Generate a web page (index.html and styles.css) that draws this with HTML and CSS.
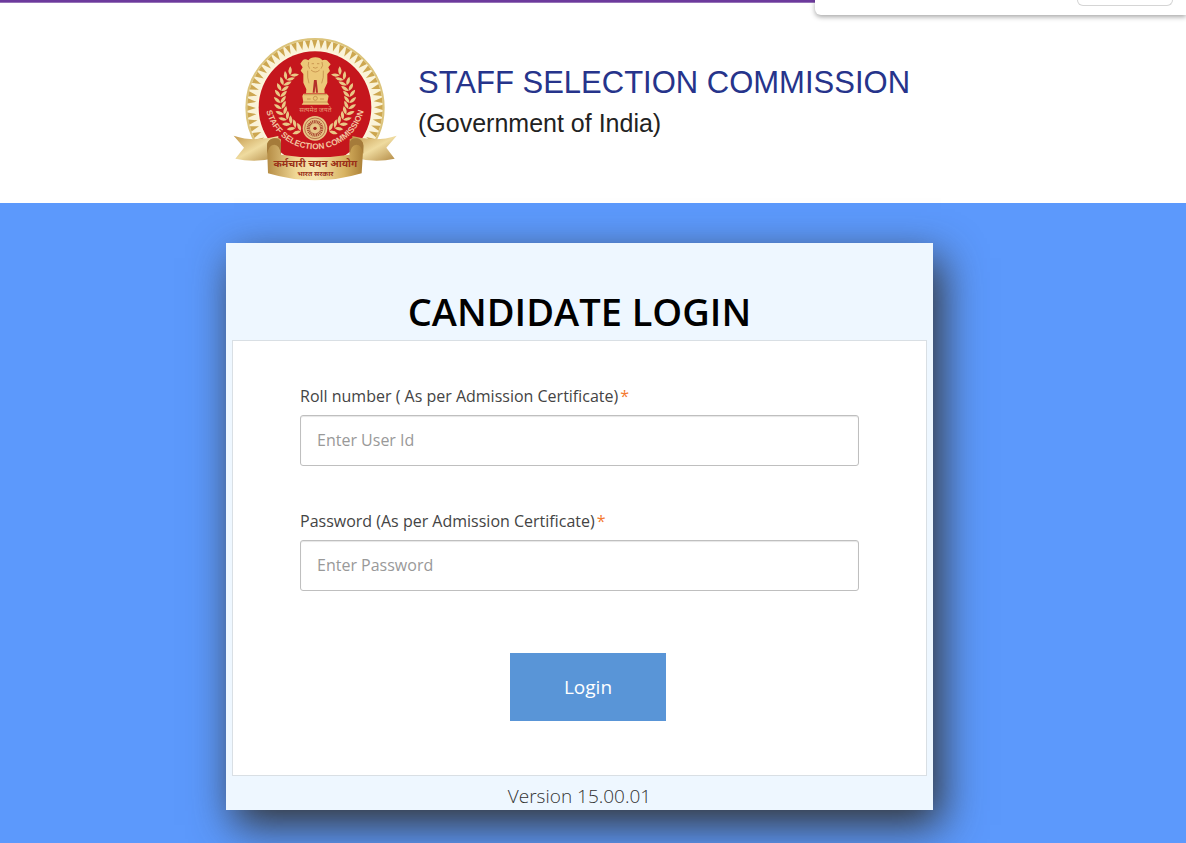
FILE: index.html
```
<!DOCTYPE html>
<html lang="en">
<head>
  <meta charset="UTF-8">
  <meta name="viewport" content="width=device-width, initial-scale=1">
  <title>Candidate Login</title>
  <link rel="stylesheet" href="styles.css">
</head>
<body>
  <div class="top-line"></div>
  <div class="popup"><div class="popup-box"></div></div>

  <header class="site-header">
    <div class="brand">
      <svg class="emblem" viewBox="0 0 540 480" role="img" aria-label="Staff Selection Commission emblem">
        <defs>
          <linearGradient id="gold" x1="0" x2="1" y1="0" y2="0">
            <stop offset="0" stop-color="#b58c44"/>
            <stop offset=".3" stop-color="#f0d795"/>
            <stop offset=".5" stop-color="#f7e4b0"/>
            <stop offset=".8" stop-color="#d9b462"/>
            <stop offset="1" stop-color="#ab8038"/>
          </linearGradient>
          <linearGradient id="tail" x1="0" x2="1" y1="0" y2="1">
            <stop offset="0" stop-color="#c59a4d"/>
            <stop offset=".5" stop-color="#efdb9f"/>
            <stop offset="1" stop-color="#b18843"/>
          </linearGradient>
          <path id="ringText" d="M120 208 A150 150 0 0 0 420 208"/>
        </defs>
        <circle cx="270" cy="233" r="206" fill="#faf3d8" stroke="#dcc47c" stroke-width="6"/>
        <g id="teeth" fill="#cda750"></g>
        <circle cx="270" cy="233" r="174" fill="#fdf6dc"/>
        <circle cx="270" cy="233" r="169" fill="#c5161d"/>
        <g id="laurel" fill="#eac886"></g>

        <!-- lion capital -->
        <g fill="#ecc878">
          <path d="M232 92 Q240 84 250 91 Q256 82 271 82 Q286 82 292 91 Q304 85 311 96 L317 103 L310 112 L315 123 L307 132 L307 158 L298 178 L299 190 H243 L244 178 L235 158 V132 L227 122 L233 112 L226 101 Z"/>
          <path d="M236 191 H305 L311 198 L307 217 L313 224 H230 L235 217 L232 198 Z"/>
        </g>
        <g fill="none" stroke="#b98040" stroke-width="2">
          <path d="M251 96 Q247 107 254 116 M291 96 Q296 107 288 116 M260 101 H267 M276 101 H283 M264 112 Q271 117 278 112 M248 122 Q246 143 252 160 M295 122 Q297 143 290 160 M258 120 Q271 132 284 120"/>
          <path d="M237 194 H305 M236 216 H307"/>
          <circle cx="271" cy="205" r="6"/>
          <path d="M246 207 H257 M285 207 H297"/>
        </g>
        <path d="M267 150 L263 188 H269 L271 168 L273 188 H279 L275 150 Z" fill="#b4302a"/>
        <text class="motto" x="271" y="247">सत्यमेव जयते</text>

        <!-- wheel -->
        <circle cx="270" cy="295" r="37" fill="#e7c586"/>
        <circle cx="270" cy="295" r="31" fill="none" stroke="#a34a2c" stroke-width="2"/>
        <circle cx="270" cy="295" r="20" fill="none" stroke="#a8452f" stroke-width="10" stroke-dasharray="3 2"/>
        <circle cx="270" cy="295" r="5" fill="#a3231d"/>

        <text class="ring-text"><textPath href="#ringText" startOffset="50%">STAFF SELECTION COMMISSION</textPath></text>

        <!-- ribbon -->
        <path d="M26 317 Q88 338 160 318 L160 382 Q92 400 31 386 L57 353 Z" fill="url(#tail)"/>
        <path d="M515 317 Q452 338 382 318 L382 382 Q448 400 509 386 L484 353 Z" fill="url(#tail)"/>
        <path d="M126 348 Q126 330 145 325 Q160 322 168 328 L168 374 Q270 390 374 374 L374 328 Q382 322 397 325 Q415 330 415 348 L410 430 Q270 472 129 430 Z" fill="url(#gold)"/>
        <path d="M126 346 Q128 328 148 325 Q166 324 168 340 L168 374 Q164 344 148 344 Q132 344 126 372 Z" fill="#a57b3a"/>
        <path d="M415 346 Q413 328 394 325 Q376 324 374 340 L374 374 Q378 344 394 344 Q410 344 415 372 Z" fill="#a57b3a"/>
        <text class="ribbon-text" x="271" y="412">कर्मचारी चयन आयोग</text>
        <text class="ribbon-small" x="271" y="439">भारत सरकार</text>
      </svg>
      <div class="brand-text">
        <div class="brand-name">STAFF SELECTION COMMISSION</div>
        <div class="brand-sub">(Government of India)</div>
      </div>
    </div>
  </header>

  <main class="page">
    <div class="login-card">
      <h1>CANDIDATE LOGIN</h1>
      <form class="login-form">
        <div class="form-group">
          <label for="userid">Roll number ( As per Admission Certificate)<span class="required">*</span></label>
          <input id="userid" name="userid" type="text" placeholder="Enter User Id">
        </div>
        <div class="form-group">
          <label for="password">Password (As per Admission Certificate)<span class="required">*</span></label>
          <input id="password" name="password" type="password" placeholder="Enter Password">
        </div>
        <button type="submit" class="login-btn">Login</button>
      </form>
      <div class="version">Version 15.00.01</div>
    </div>
  </main>
  <script src="script.js"></script>
</body>
</html>
```
FILE: styles.css
```
* {
  box-sizing: border-box;
}
body {
  margin: 0;
  min-height: 100vh;
  display: flex;
  flex-direction: column;
  font-family: "Open Sans", sans-serif;
  background: #fff;
  color: #333;
}
.top-line {
  height: 3px;
  background: #6c3a9c;
  border-bottom: 1px solid #9672b8;
}

/* panel hanging over the top right corner */
.popup {
  position: absolute;
  top: 0;
  right: 0;
  width: 371px;
  height: 15px;
  padding-right: 13px;
  background: #fff;
  border-bottom-left-radius: 6px;
  box-shadow: 0 2px 5px rgba(0,0,0,0.35);
}
.popup-box {
  width: 96px;
  height: 6px;
  margin-left: auto;
  border: 1px solid #d5d5d5;
  border-top: none;
  border-radius: 0 0 6px 6px;
}

.site-header {
  height: 200px;
  padding: 27px 27px 0 0;
}
.brand {
  display: flex;
  width: 709px;
  margin: 0 auto;
}
.emblem {
  width: 180px;
  height: 160px;
  flex: none;
}
.brand-text {
  padding: 33px 0 0 13px;
  font-family: "Liberation Sans", Arial, sans-serif;
  white-space: nowrap;
}
.brand-name {
  font-size: 31px;
  line-height: 40px;
  color: #26348b;
}
.brand-sub {
  font-size: 25px;
  line-height: 40px;
  color: #222;
}
.ring-text {
  font: bold 25px "Liberation Sans", Arial, sans-serif;
  fill: #f3c5a0;
  text-anchor: middle;
}
.motto,
.ribbon-text,
.ribbon-small {
  font-family: "Noto Sans Devanagari", "Noto Sans", sans-serif;
  font-weight: bold;
  text-anchor: middle;
}
.motto {
  font-size: 20px;
  font-weight: normal;
  fill: #e99a72;
}
.ribbon-text {
  font-size: 30px;
  fill: #9a3018;
}
.ribbon-small {
  font-size: 21px;
  fill: #9a3018;
}

.page {
  flex: 1;
  padding: 40px 27px 33px 0;
  background: #5c99fc;
}
.login-card {
  max-width: 707px;
  margin: 0 auto;
  padding: 41px 6px 0;
  background: #eef7ff;
  box-shadow: 8px 15px 40px #333;
}
h1 {
  margin: 0 0 2px;
  font-size: 38px;
  line-height: 54px;
  font-weight: 600;
  text-align: center;
  color: #000;
}
.login-form {
  padding: 43px 67px 54px;
  background: #fff;
  border: 1px solid #d9dfe4;
}
.form-group {
  margin-bottom: 43px;
}
label {
  display: block;
  margin-bottom: 7px;
  font-size: 16px;
  line-height: 24px;
  color: #444;
}
.required {
  margin-left: 2px;
  color: #f47a30;
}
input {
  display: block;
  width: 100%;
  height: 51px;
  padding: 0 16px 1px;
  border: 1px solid #bfbfbf;
  border-radius: 3px;
  box-shadow: inset 0 1px 1px rgba(0,0,0,0.1);
  font-family: inherit;
  font-size: 16px;
  color: #333;
}
input::placeholder {
  color: #999;
}
.login-btn {
  display: block;
  width: 156px;
  height: 68px;
  margin: 62px auto 0 210px;
  border: none;
  background: #5995d7;
  color: #fff;
  font-family: inherit;
  font-size: 19px;
  cursor: pointer;
}
.version {
  height: 34px;
  padding-top: 3px;
  font-size: 19px;
  line-height: 34px;
  font-weight: 300;
  text-align: center;
}
```
FILE: script.js
```
const NS = 'http://www.w3.org/2000/svg';

function addPath(parent, d, transform) {
  const path = document.createElementNS(NS, 'path');
  path.setAttribute('d', d);
  path.setAttribute('transform', transform);
  parent.appendChild(path);
}

// Triangles of the outer ring
const teeth = document.getElementById('teeth');
for (let i = 0; i < 60; i++) {
  addPath(teeth, 'M-9 -203 H7 L-1 -177 Z', `translate(270 233) rotate(${i * 6})`);
}

// Laurel leaves, mirrored on both sides
const laurel = document.getElementById('laurel');
for (let i = 0; i < 12; i++) {
  const angle = 24 + i * 10;
  for (const side of [1, -1]) {
    const base = `translate(270 208) scale(${side} 1) rotate(${-angle}) translate(0 104)`;
    addPath(laurel, 'M0 0 Q16 2 20 18 Q3 17 0 0', base);
    addPath(laurel, 'M0 0 Q16 -2 20 -18 Q3 -17 0 0', base);
  }
}
```
